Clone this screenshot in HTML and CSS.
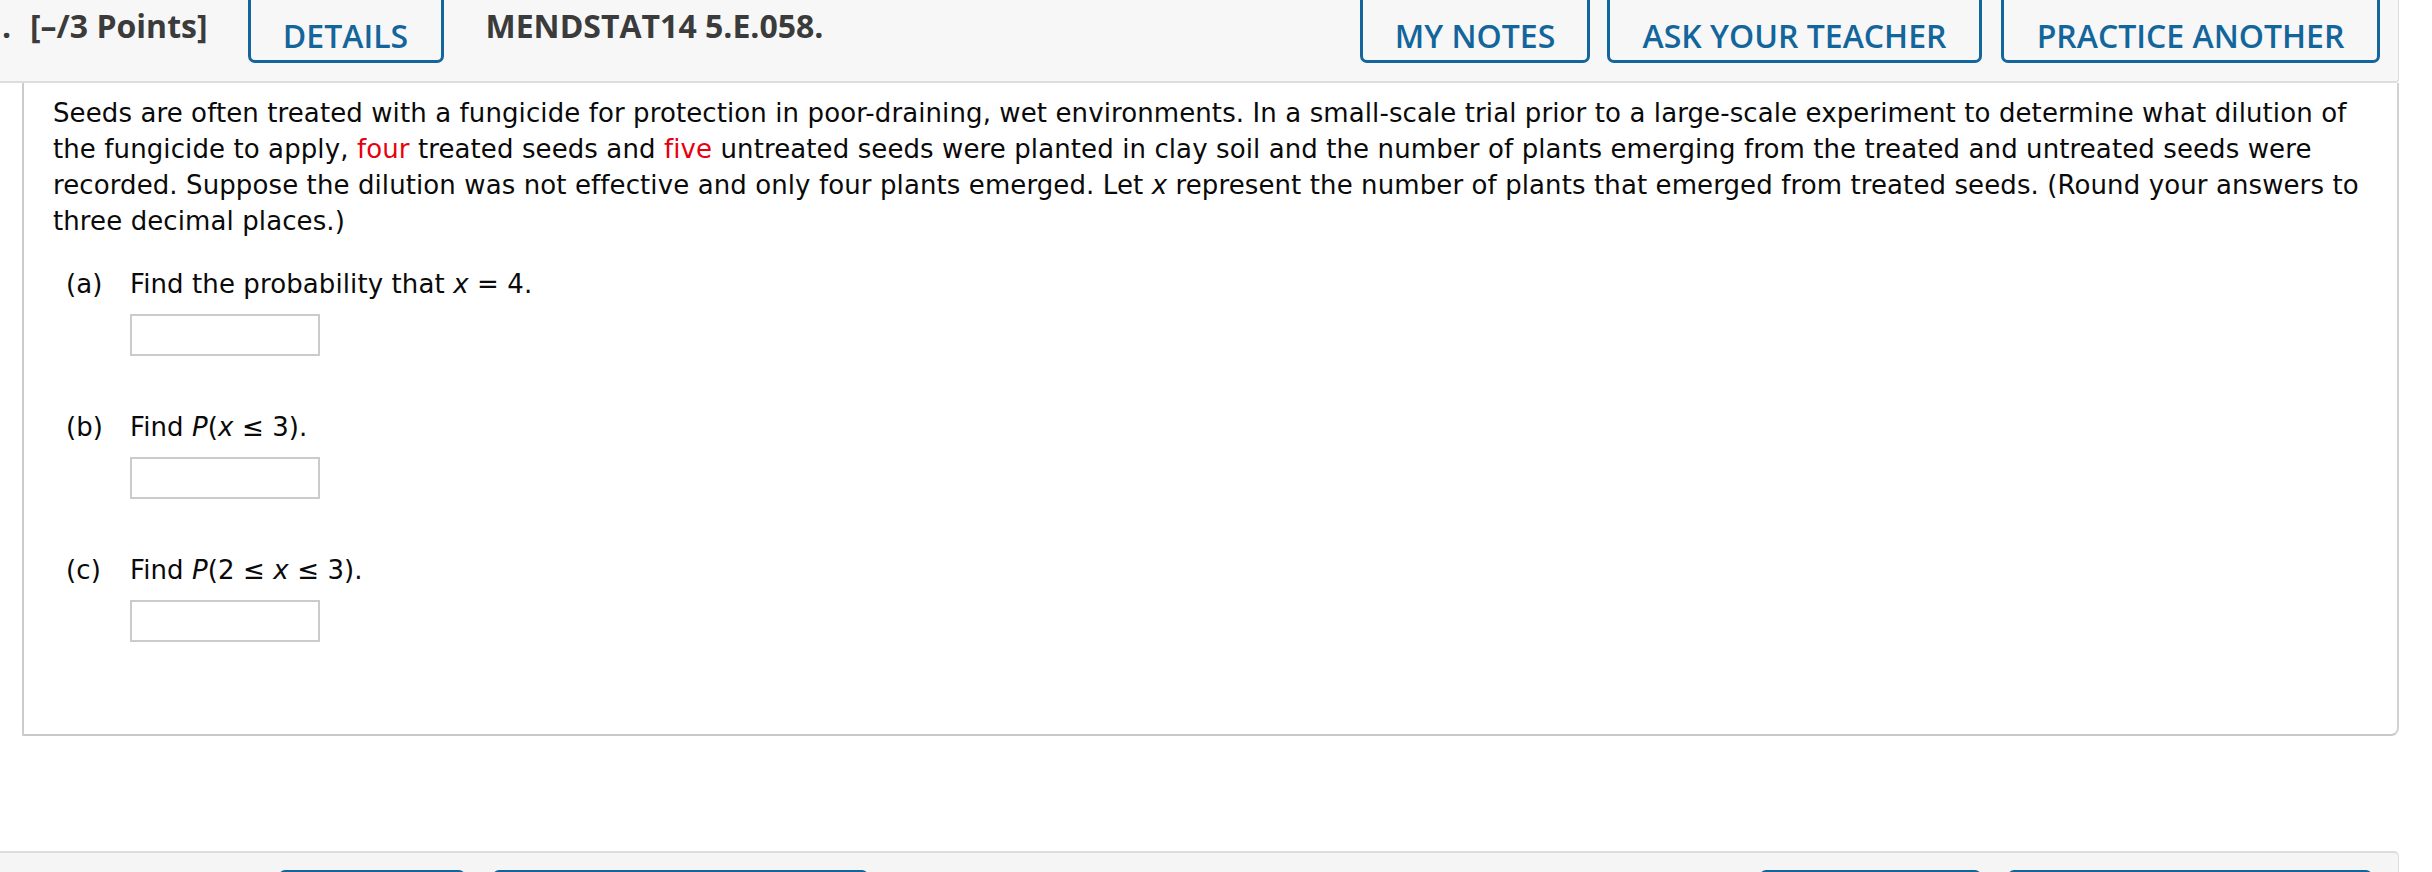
FILE: index.html
```html
<!DOCTYPE html>
<html lang="en">
<head>
<meta charset="utf-8">
<title>MENDSTAT14 5.E.058.</title>
<link rel="stylesheet" href="styles.css">
</head>
<body>
<div class="page">
  <div class="qhead">
    <span class="qnum">.</span>
    <span class="qpoints">[–/3 Points]</span>
    <span class="btn btn-details">DETAILS</span>
    <span class="qtitle">MENDSTAT14 5.E.058.</span>
    <span class="spacer"></span>
    <span class="btn btn-notes">MY NOTES</span>
    <span class="btn btn-ask">ASK YOUR TEACHER</span>
    <span class="btn btn-practice">PRACTICE ANOTHER</span>
  </div>

  <div class="panel">
    <p class="stem">Seeds are often treated with a fungicide for protection in poor-draining, wet environments. In a small-scale trial prior to a large-scale experiment to determine what dilution of<br>the fungicide to apply, <span class="red">four</span> treated seeds and <span class="red">five</span> untreated seeds were planted in clay soil and the number of plants emerging from the treated and untreated seeds were<br>recorded. Suppose the dilution was not effective and only four plants emerged. Let <i>x</i> represent the number of plants that emerged from treated seeds. (Round your answers to<br>three decimal places.)</p>

    <div class="parts">
      <div class="part">
        <span class="plabel">(a)</span>
        <div class="pbody">
          <div class="ptext">Find the probability that <i>x</i> = 4.</div>
          <div class="answer"></div>
        </div>
      </div>
      <div class="part">
        <span class="plabel">(b)</span>
        <div class="pbody">
          <div class="ptext">Find <i>P</i>(<i>x</i> ≤ 3).</div>
          <div class="answer"></div>
        </div>
      </div>
      <div class="part">
        <span class="plabel">(c)</span>
        <div class="pbody">
          <div class="ptext">Find <i>P</i>(2 ≤ <i>x</i> ≤ 3).</div>
          <div class="answer"></div>
        </div>
      </div>
    </div>
  </div>

  <div class="qhead2">
    <span class="btn2 b2-1"></span>
    <span class="btn2 b2-2"></span>
    <span class="spacer"></span>
    <span class="btn2 b2-3"></span>
    <span class="btn2 b2-4"></span>
  </div>
</div>
</body>
</html>
```
FILE: styles.css
```css
html, body {
  margin: 0;
  padding: 0;
  background: #ffffff;
  overflow: hidden;
}

.page {
  width: 2399px;
}

.qhead {
  display: flex;
  align-items: flex-start;
  height: 81px;
  background: #f7f7f7;
  border-bottom: 2px solid #dddddd;
  border-right: 1px solid #dddddd;
  border-bottom-right-radius: 4px;
  padding-right: 18px;
  font-family: "Open Sans", "Liberation Sans", sans-serif;
}

.qnum,
.qpoints,
.qtitle {
  font-size: 32px;
  font-weight: 700;
  line-height: 40px;
  margin-top: 6px;
  color: #3b3b3b;
  white-space: nowrap;
}

.qnum {
  width: 28px;
  padding-left: 2px;
}

.qtitle {
  margin-left: 42px;
}

.spacer {
  flex: 1;
}

.btn {
  display: block;
  box-sizing: border-box;
  height: 63px;
  padding: 14px 0 0;
  text-align: center;
  border: 3px solid #13669b;
  border-top: 0;
  border-radius: 0 0 7px 7px;
  color: #13669b;
  font-size: 32px;
  font-weight: 600;
  line-height: 44px;
  white-space: nowrap;
}

.btn-details { width: 196px; margin-left: 40px; }
.btn-notes { width: 230px; }
.btn-ask { width: 375px; margin-left: 17px; }
.btn-practice { width: 379px; margin-left: 19px; }

.panel {
  margin-left: 22px;
  border-left: 2px solid #cccccc;
  border-right: 2px solid #d2d2d2;
  border-bottom: 2px solid #c8c8c8;
  border-bottom-right-radius: 8px;
  padding: 12px 27px 92px 29px;
  font-family: "DejaVu Sans", Verdana, sans-serif;
  font-size: 26px;
  letter-spacing: 0.1px;
  line-height: 36px;
  color: #0a0a0a;
}

.stem {
  margin: 0;
  white-space: nowrap;
}

.red {
  color: #e8000d;
}

.parts {
  margin-top: 27px;
  padding-left: 13px;
}

.part {
  display: flex;
  margin-top: 53px;
}

.part:first-child {
  margin-top: 0;
}

.plabel {
  width: 64px;
  flex: none;
}

.answer {
  box-sizing: border-box;
  width: 190px;
  height: 42px;
  margin-top: 12px;
  border: 2px solid #cbcbcb;
  background: #ffffff;
}

.qhead2 {
  display: flex;
  align-items: flex-start;
  box-sizing: border-box;
  margin-top: 115px;
  height: 21px;
  overflow: hidden;
  background: #f5f5f5;
  border-top: 2px solid #dddddd;
  border-right: 1px solid #dddddd;
  border-top-right-radius: 5px;
  padding: 17px 26px 0 279px;
}

.btn2 {
  display: block;
  box-sizing: border-box;
  height: 60px;
  flex: none;
  border: 3px solid #13669b;
  border-radius: 6px 6px 0 0;
}

.b2-1 { width: 186px; }
.b2-2 { width: 375px; margin-left: 28px; }
.b2-3 { width: 221px; }
.b2-4 { width: 364px; margin-left: 27px; }
```
